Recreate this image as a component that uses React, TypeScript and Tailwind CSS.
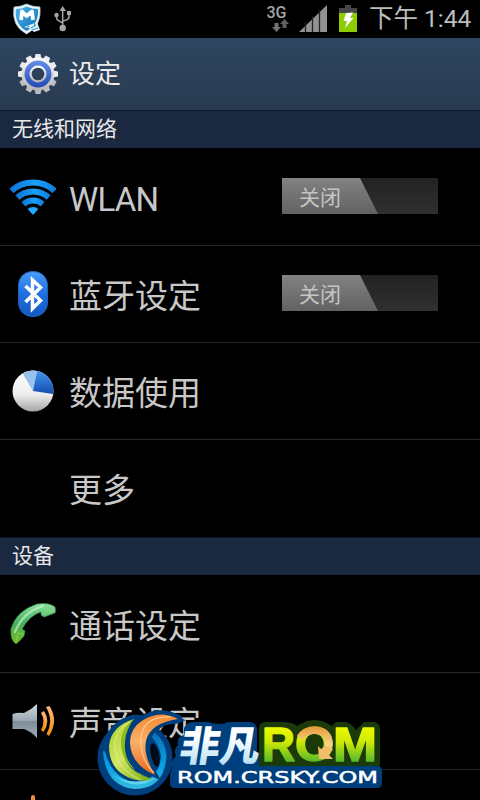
import type { ReactNode } from 'react'

function ShieldIcon() {
  return (
    <svg width="30" height="32" viewBox="0 0 30 32">
      <defs>
        <linearGradient id="shield" x1="0" y1="0" x2="1" y2="1">
          <stop offset="0" stopColor="#4fb4ea" />
          <stop offset="1" stopColor="#0a70b8" />
        </linearGradient>
      </defs>
      <path d="M2 4Q8 4 14.500 1Q21 4 28 4Q30 23 14.500 31Q-1 23 2 4Z" fill="#e9f3f8" stroke="#a5c3d2" strokeWidth="0.700" />
      <path d="M4 6Q10 6 14.500 3.500Q20 6 26 6Q27 21 14.500 28Q2 21 4 6Z" fill="url(#shield)" />
      <path d="M9 17L10 8.500L14.500 13L20 8.500L21 17" fill="none" stroke="#fff" strokeWidth="3.800" strokeLinejoin="round" />
      <path d="M12 24L25 19L28 27L22 29L17 25Z" fill="#dceef7" />
      <path d="M15 24L17 23M19 25L24 22M20 27L26 25M22 20L23 23" stroke="#4b9bc6" strokeWidth="1.200" />
    </svg>
  )
}

function UsbIcon() {
  return (
    <svg width="18" height="26" viewBox="0 0 18 26" fill="none" stroke="#a6a6a6" strokeWidth="1.500">
      <path d="M8.700 4V22M2.500 9V12Q2.500 14 8.700 17M15 8V11Q15 14 8.700 15" />
      <path d="M5.500 5L8.700 0L12 5Z" fill="#a6a6a6" stroke="none" />
      <circle cx="8.700" cy="22" r="3.200" fill="#a6a6a6" stroke="none" />
      <circle cx="2.500" cy="9" r="2.200" fill="#a6a6a6" stroke="none" />
      <path d="M13 5H17V9H13Z" fill="#a6a6a6" stroke="none" />
    </svg>
  )
}

function GearIcon() {
  return (
    <svg width="40" height="42" viewBox="-20 -21 40 42">
      <defs>
        <linearGradient id="gear" x1="0" y1="0" x2="0" y2="1">
          <stop offset="0" stopColor="#ffffff" />
          <stop offset="1" stopColor="#b4b4b4" />
        </linearGradient>
        <linearGradient id="gearBlue" x1="0" y1="0" x2="0" y2="1">
          <stop offset="0" stopColor="#668fea" />
          <stop offset="1" stopColor="#2349b5" />
        </linearGradient>
      </defs>
      {[0, 30, 60, 90, 120, 150, 180, 210, 240, 270, 300, 330].map(a => (
        <path key={a} d="M-3.500 -15L-2.500 -20H2.500L3.500 -15Z" fill={a > 90 && a < 270 ? '#bcbcbc' : '#ececec'} transform={`rotate(${a})`} />
      ))}
      <circle r="16.500" fill="url(#gear)" />
      <circle r="13.500" fill="url(#gearBlue)" />
      <circle r="8.500" fill="url(#gear)" />
      <circle r="6.300" fill="#2d4059" />
    </svg>
  )
}

function WifiIcon() {
  return (
    <svg width="46" height="36" viewBox="0 0 46 36">
      <defs>
        <linearGradient id="wifi" x1="0" y1="0" x2="1" y2="0.300">
          <stop offset="0" stopColor="#0b5fc4" />
          <stop offset="0.500" stopColor="#19a0f8" />
          <stop offset="1" stopColor="#0867cf" />
        </linearGradient>
        <clipPath id="wifiFan">
          <path d="M23 36L-3 7V-4H49V7Z" />
        </clipPath>
      </defs>
      <g clipPath="url(#wifiFan)" fill="none" stroke="url(#wifi)">
        <circle cx="23" cy="36" r="32.500" strokeWidth="6" />
        <circle cx="23" cy="36" r="23.500" strokeWidth="6" />
        <circle cx="23" cy="36" r="14.500" strokeWidth="6" />
        <circle cx="23" cy="36" r="4" strokeWidth="8" stroke="#20a7ff" />
      </g>
    </svg>
  )
}

function BluetoothIcon() {
  return (
    <svg width="30" height="46" viewBox="0 0 30 46">
      <defs>
        <linearGradient id="bt" x1="0" y1="0" x2="0" y2="1">
          <stop offset="0" stopColor="#4b9bfa" />
          <stop offset="0.500" stopColor="#1e70e0" />
          <stop offset="1" stopColor="#1558c1" />
        </linearGradient>
      </defs>
      <rect x="0.500" y="0.500" width="29" height="45" rx="13.500" fill="url(#bt)" stroke="#1e62bd" />
      <path d="M7.500 15L22.500 29.500L14.500 37.500V9L22.500 16.500L7.500 31" fill="none" stroke="#fff" strokeWidth="3.500" />
    </svg>
  )
}

function PieIcon() {
  return (
    <svg width="42" height="42" viewBox="0 0 42 42">
      <defs>
        <linearGradient id="pie" x1="0" y1="0" x2="0" y2="1">
          <stop offset="0" stopColor="#ffffff" />
          <stop offset="0.600" stopColor="#ececec" />
          <stop offset="1" stopColor="#a5a5a5" />
        </linearGradient>
        <linearGradient id="pieBlue" x1="0" y1="0" x2="0" y2="1">
          <stop offset="0" stopColor="#4495ec" />
          <stop offset="1" stopColor="#124db1" />
        </linearGradient>
      </defs>
      <circle cx="21" cy="21" r="20.500" fill="url(#pie)" />
      <path d="M21 21L10.500 3.300A20.500 20.500 0 0 1 25 0.900Z" fill="#99c1ee" />
      <path d="M21 21L25 0.900A20.500 20.500 0 0 1 41.300 24Z" fill="url(#pieBlue)" />
    </svg>
  )
}

function PhoneIcon() {
  return (
    <svg width="46" height="42" viewBox="0 0 46 42">
      <defs>
        <linearGradient id="phone" x1="0" y1="0" x2="0" y2="1">
          <stop offset="0" stopColor="#8be0a2" />
          <stop offset="0.500" stopColor="#47ae60" />
          <stop offset="1" stopColor="#75bd22" />
        </linearGradient>
      </defs>
      <path d="M6 41Q0 37 1 26Q6 8 27 1Q39 -1 45 4Q46 8 45 10L34 14L31 12L31 9Q20 12 12 26L15 28L14 33Q10 38 6 41Z" fill="url(#phone)" stroke="#3d9147" strokeWidth="0.600" />
      <path d="M5 29Q13 9 33 3" fill="none" stroke="#c9f6cd" strokeWidth="2.200" strokeLinecap="round" opacity="0.650" />
      <path d="M6 39L8 30L14 31M33 12L37 8L44 9" fill="none" stroke="#97e858" strokeWidth="1" opacity="0.600" />
    </svg>
  )
}

function SoundIcon() {
  return (
    <svg width="43" height="36" viewBox="0 0 43 36">
      <defs>
        <linearGradient id="speaker" x1="0" y1="0" x2="0" y2="1">
          <stop offset="0" stopColor="#cfd6dc" />
          <stop offset="0.480" stopColor="#9dabb6" />
          <stop offset="0.520" stopColor="#7c8c99" />
          <stop offset="1" stopColor="#a3afb8" />
        </linearGradient>
        <linearGradient id="waves" x1="0" y1="0" x2="0" y2="1">
          <stop offset="0" stopColor="#ffba78" />
          <stop offset="1" stopColor="#f58a08" />
        </linearGradient>
      </defs>
      <path d="M0.500 11Q6 9 12 10Q19 7 25 1V35Q20 29 12 26H0.500Z" fill="url(#speaker)" />
      <path d="M29 10Q34 18 29 27L31.500 29Q39 18 32 8Z" fill="url(#waves)" />
      <path d="M34 4Q42 18 34.500 31L37 33Q47 18 37.500 3Z" fill="url(#waves)" />
    </svg>
  )
}

function Toggle() {
  return (
    <div className="mb-0.5 h-9 w-39 bg-linear-to-b from-[#222222] to-[#303030]">
      <div className="flex h-9 w-24 items-center bg-linear-to-b from-[#828282] to-[#626262] pl-[17px] text-[21px] leading-none text-[#c5c5c5] [clip-path:polygon(0_0,78px_0,96px_100%,0_100%)]">
        <span className="pt-[5px]">关闭</span>
      </div>
    </div>
  )
}

function Row({ icon, label, toggle, line }: { icon?: ReactNode; label: ReactNode; toggle?: boolean; line?: boolean }) {
  return (
    <div className={`flex h-[97px] shrink-0 items-center border-t pr-[42px] ${line ? 'border-[#282828]' : 'border-black'}`}>
      <div className="flex w-[66px] shrink-0 justify-center">{icon}</div>
      <div className="flex-1 pt-[4px] pl-[3px] text-[33px] leading-none whitespace-nowrap text-[#c8c8c8]">{label}</div>
      {toggle && <Toggle />}
    </div>
  )
}

function SectionTitle({ children }: { children: ReactNode }) {
  return (
    <div className="flex h-[38px] shrink-0 items-center border-t border-[#0d1826] bg-[#1a2940] pl-3 text-[21px] leading-none text-[#e8e8e8]">
      {children}
    </div>
  )
}

function StatusBar() {
  return (
    <div className="flex h-[38px] shrink-0 items-center pl-3">
      <ShieldIcon />
      <div className="pl-3"><UsbIcon /></div>
      <svg className="ml-[194px]" width="92" height="38" viewBox="266 0 92 38">
        <text x="266.500" y="17.500" fontSize="17" fontWeight="500" fill="#a5a5a5" textLength="20" lengthAdjust="spacingAndGlyphs">3G</text>
        <path d="M274.500 23H278.500V27H281L276.500 32L272 27H274.500Z" fill="#737373" />
        <path d="M282.500 28H286.500V24H289L284.500 19L280 24H282.500Z" fill="#606060" />
        <path d="M299 32L327 5V32Z" fill="#929292" />
        <path d="M305.500 22V32M312.500 16V32M319.500 10V32" stroke="#222" strokeWidth="1.300" />
        <path d="M339 8H345V5H351V8H357V13H339Z" fill="#464646" />
        <path d="M339 13H357V32H339Z" fill="#8ccc00" />
        <path d="M346 13L353 12.500L350 18H353.500L345 28L347 21H343.500Z" fill="#fff" />
      </svg>
      <div className="pt-px pl-[11px] text-[24.5px] leading-none whitespace-nowrap text-[#bdbdbd]">下午 1:44</div>
    </div>
  )
}

// Site badge floating over the bottom of the list
function RomBadge() {
  return (
    <svg className="absolute top-[700px] left-[90px]" width="310" height="100" viewBox="90 700 310 100">
      <defs>
        <linearGradient id="lime" gradientUnits="userSpaceOnUse" x1="0" y1="727" x2="0" y2="763">
          <stop offset="0" stopColor="#eafa00" />
          <stop offset="0.400" stopColor="#d2ea05" />
          <stop offset="1" stopColor="#4fb52d" />
        </linearGradient>
        <linearGradient id="ice" x1="0" y1="0" x2="0" y2="1">
          <stop offset="0.300" stopColor="#ffffff" />
          <stop offset="1" stopColor="#a9daf5" />
        </linearGradient>
        <linearGradient id="gold" gradientUnits="userSpaceOnUse" x1="0" y1="727" x2="0" y2="760">
          <stop offset="0" stopColor="#e79a3c" />
          <stop offset="0.500" stopColor="#f6d28a" />
          <stop offset="1" stopColor="#efb458" />
        </linearGradient>
        <linearGradient id="leaf" x1="0" y1="0" x2="1" y2="1">
          <stop offset="0" stopColor="#a6cd27" />
          <stop offset="0.450" stopColor="#d2e864" />
          <stop offset="1" stopColor="#76a90d" />
        </linearGradient>
        <linearGradient id="flame" x1="0" y1="0" x2="0" y2="1">
          <stop offset="0" stopColor="#f28a32" />
          <stop offset="0.450" stopColor="#fbb06a" />
          <stop offset="1" stopColor="#e76719" />
        </linearGradient>
        <linearGradient id="ring" x1="0" y1="0" x2="0" y2="1">
          <stop offset="0" stopColor="#0874b9" />
          <stop offset="0.600" stopColor="#08a1df" />
          <stop offset="1" stopColor="#35bbe2" />
        </linearGradient>
      </defs>

      {/* swirl */}
      <g fill="#003f7e" stroke="#003f7e" strokeWidth="9" strokeLinejoin="round">
        <circle cx="135" cy="758" r="29" fill="none" strokeWidth="17" />
        <path d="M134 719Q111 725 109 746Q110 777 138 780L151 779L155 775Q143 750 153 729Q161 719 178 719Q158 710 143 720Z" />
      </g>
      <ellipse cx="155" cy="755" rx="4" ry="12" fill="#020b15" transform="rotate(-12 155 755)" />
      <path d="M155 734Q164 741 165.500 755Q164 788 135 788Q107 786 104 752Q112 780 135 783Q160 782 162 756Q160 744 153 737Z" fill="url(#ring)" stroke="url(#ring)" strokeWidth="2" strokeLinejoin="round" />
      <path d="M113 775Q133 787 157 777Q137 793 113 775Z" fill="#62d3ed" />
      <path d="M134 719Q111 726 109 746Q109 773 136 780Q145 782 152 779Q121 771 122 741Q123 727 134 719Z" fill="url(#leaf)" />
      <path d="M134 719Q120 729 121 743Q121 768 152 779Q138 776 132 766Q122 755 126 735Q129 725 134 719Z" fill="#8cb91c" />
      <path d="M130 722Q112 732 115 749Q117 770 141 780" fill="none" stroke="#e4f09d" strokeWidth="0.800" />
      <path d="M178 719Q161 710 145 719Q130 727 130 743Q131 765 155 775Q143 755 146 741Q150 723 178 719Z" fill="url(#flame)" stroke="#003f7e" strokeWidth="5" paintOrder="stroke" />
      <path d="M171 717Q143 716 141 738Q140 759 154 773" fill="none" stroke="#ffc991" strokeWidth="1.200" />

      {/* wordmark plates */}
      <path d="M184 728Q187 721 195 722H208Q221 726 228 722H250Q257 723 257 730V752Q262 757 258 770H172Q170 761 176 756Q173 749 178 745Q176 737 184 735Z" fill="#003f7e" />
      <path d="M266 722H283Q292 722 297 726Q315 714 332 726L336 722H346Q352 724 356 730L364 722H373Q380 722 380 729V764Q379 770 372 770H265Q259 770 259 763V729Q259 722 266 722Z" fill="#1b3a0a" />
      <path d="M175 767Q170 768 170 775V784Q170 788 175 788H377Q382 788 382 783V771Q382 766 377 766H184Z" fill="#003f7e" />

      <text x="0" y="0" fontSize="41" fontWeight="900" fill="url(#ice)" textLength="80" lengthAdjust="spacingAndGlyphs" transform="translate(178 760.500) skewX(-9)">非凡</text>
      <g fontFamily="'Liberation Sans', sans-serif" fontSize="48" fontWeight="700" fill="url(#lime)" stroke="url(#lime)" strokeWidth="1.500" strokeLinejoin="round">
        <text x="262" y="761" textLength="33" lengthAdjust="spacingAndGlyphs">R</text>
        <text x="333" y="761" textLength="44" lengthAdjust="spacingAndGlyphs">M</text>
        <text x="295" y="761" textLength="39" lengthAdjust="spacingAndGlyphs">O</text>
      </g>
      <path d="M300 738Q305 730 315 730Q328.500 731 329 744Q328.500 749 325 753" fill="none" stroke="url(#gold)" strokeWidth="7.500" />
      <path d="M318 746L319 759L333 759L329 755L333 749L325 746L321 749Z" fill="#efbd65" />
      <text x="177" y="782.500" fontFamily="'DejaVu Sans', sans-serif" fontSize="15.500" fill="#fff" stroke="#fff" strokeWidth="0.500" textLength="201" lengthAdjust="spacingAndGlyphs">ROM.CRSKY.COM</text>
    </svg>
  )
}

export default function App() {
  return (
    <div className="relative flex h-[800px] w-[480px] flex-col overflow-hidden bg-black font-[Roboto,'Noto_Sans_CJK_SC',sans-serif]">
      <StatusBar />
      <header className="flex h-[72px] shrink-0 items-center bg-linear-to-b from-[#2f4661] to-[#283a50] pl-[18px]">
        <GearIcon />
        <h1 className="pl-[11px] text-[26px] leading-none text-[#ececec]">设定</h1>
      </header>

      <SectionTitle>无线和网络</SectionTitle>
      <Row icon={<WifiIcon />} label={<span className="tracking-[-0.8px]">WLAN</span>} toggle />
      <Row icon={<BluetoothIcon />} label="蓝牙设定" toggle line />
      <Row icon={<PieIcon />} label="数据使用" line />
      <Row label="更多" line />

      <div className="h-px shrink-0" />
      <SectionTitle>设备</SectionTitle>
      <Row icon={<PhoneIcon />} label="通话设定" />
      <Row icon={<SoundIcon />} label="声音设定" line />
      <div className="flex h-[97px] shrink-0 justify-center self-stretch border-t border-[#282828] pt-[25px] pr-[414px]">
        <div className="h-10 w-1 rounded-t-sm bg-[#f28a3d]" />
      </div>
      <RomBadge />
    </div>
  )
}
